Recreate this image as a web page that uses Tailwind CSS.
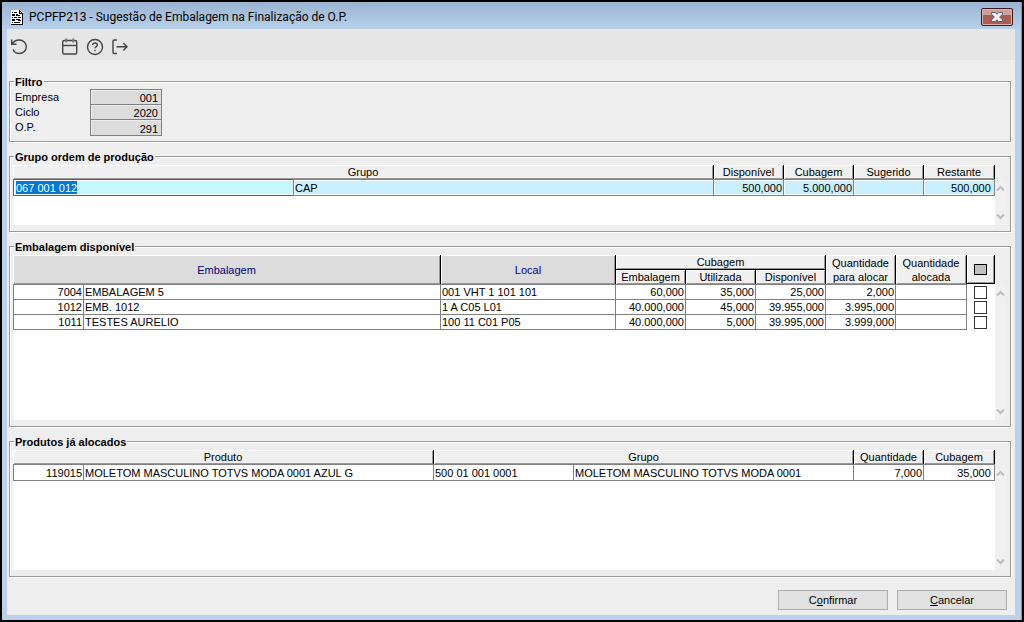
<!DOCTYPE html>
<html lang="pt-BR">
  <head>
    <meta charset="UTF-8" />
    <meta name="viewport" content="width=device-width, initial-scale=1.0" />
    <title>PCPFP213 - Sugestão de Embalagem na Finalização de O.P.</title>
    <script src="https://cdn.jsdelivr.net/npm/@tailwindcss/browser@4"></script>
  </head>

  <body class="flex min-h-screen flex-col bg-black p-[2px] font-['Liberation_Sans',Arial,sans-serif] text-[11px] leading-[14px] text-black">
    <div class="flex flex-1 flex-col border-r border-[#22b4dc] bg-[#b9d1ea] pr-[6px] pb-[5px] pl-[5px]">
      <!-- title bar -->
      <header class="-mr-[6px] -ml-[5px] flex h-[27px] items-center bg-linear-to-b from-[#9ab4d1] to-[#b8d0ea] pt-[3px] pr-[8px] pl-[8px]">
        <svg class="mr-[5px] h-[17px] w-[14px]" viewBox="0 0 14 17" shape-rendering="crispEdges" aria-hidden="true">
          <path d="M1 1h9l3 3v12H1z" fill="#fff" />
          <path d="M12 4h1v12h-1zM1 15h12v1H1zM9 1h1v3h3v1H9zM10 2h1v1h-1zM11 3h1v1h-1z" fill="#000" />
          <path d="M2 3h1v1H2zM4 3h3v1H4zM2 5h3v2H2zM6 5h2v1H6zM6 6h4v1H6zM2 8h1v1H2zM4 8h3v1H4zM8 8h3v1H8zM2 10h3v2H2zM6 10h4v1H6zM8 11h3v1H8zM2 13h1v1H2zM4 13h6v1H4z" fill="#000" />
        </svg>
        <h1 class="flex-1 font-[Roboto,sans-serif] text-[12px] leading-[16px]">PCPFP213 - Sugestão de Embalagem na Finalização de O.P.</h1>
        <button type="button" aria-label="Fechar" class="flex h-[18px] w-[32px] items-center justify-center rounded-[2px] border border-[#3a1a1e] bg-linear-to-b from-[#d0a098] from-40% to-[#a85e50] to-40% shadow-[inset_0_0_0_1px_#dcb4ac]">
          <svg class="h-[10px] w-[12px]" viewBox="0 0 12 10" aria-hidden="true">
            <path d="M.5 .5h4L6 2.300 7.500 .5h4v1.800L8.600 5l2.900 2.700v1.800h-4L6 7.700 4.500 9.500h-4V7.700L3.400 5 .5 2.300z" fill="#f6f6f6" stroke="#53617f" stroke-width="1" />
          </svg>
        </button>
      </header>

      <main class="flex flex-1 flex-col bg-[#eeeeee]">
        <nav class="flex h-[31px] items-center bg-[#e6e6e6] pt-[4px] pl-[3px] text-[#444]">
          <button type="button" aria-label="Desfazer" class="mr-[33px]">
            <svg class="size-[18px]" viewBox="0 0 18 18" fill="none" stroke="currentColor" stroke-width="1.400" aria-hidden="true">
              <path d="M1.700 1.500v4.700h4.800M2 6C3.800 3.200 6.400 2 9.300 2c4 0 7 3 7 6.700s-3 6.800-7 6.800c-2.800 0-5.200-1.600-6.300-4" />
            </svg>
          </button>
          <div class="flex gap-[7px]">
            <button type="button" aria-label="Calendário">
              <svg class="size-[18px]" viewBox="0 0 18 18" fill="none" stroke="currentColor" stroke-width="1.400" aria-hidden="true">
                <rect x="1.700" y="2.500" width="14" height="13.500" rx="1.500" />
                <path d="M1.700 7.500h14" />
                <path d="M5.200 .5v4M12.200 .5v4" stroke="#777" stroke-width="1.800" />
              </svg>
            </button>
            <button type="button" aria-label="Ajuda">
              <svg class="size-[18px]" viewBox="0 0 18 18" fill="none" stroke="currentColor" stroke-width="1.400" aria-hidden="true">
                <circle cx="9" cy="9" r="7.500" />
                <path d="M6.600 7c.2-1.400 1.200-2 2.400-2 1.400 0 2.400.8 2.400 2 0 1.700-2.400 1.700-2.400 3.300M9 11.800v1.500" />
              </svg>
            </button>
            <button type="button" aria-label="Sair">
              <svg class="size-[18px]" viewBox="0 0 18 18" fill="none" stroke="currentColor" stroke-width="1.400" aria-hidden="true">
                <path d="M6 2H3.200Q2 2 2 3.200v11.100q0 1.200 1.200 1.200H6M5.500 8.700h10.500M12.300 5l3.700 3.700-3.700 3.700" />
              </svg>
            </button>
          </div>
        </nav>

        <form class="flex flex-1 flex-col gap-[7px] pt-[14px] pr-[4px] pb-[5px] pl-[2px]">
          <fieldset class="border border-[#9a9a9a] px-[3px] pt-[1px] pb-[5px] shadow-[1px_1px_0_#fff,inset_1px_1px_0_#fff]">
            <legend class="ml-px h-[14px] bg-[#eeeeee] px-[1px] leading-[16px] font-bold">Filtro</legend>
            <div class="grid grid-cols-[75px_72px] pl-[2px] leading-[16px]">
              <label for="empresa" class="h-[15px]">Empresa</label>
              <input id="empresa" readonly value="001" class="h-[16px] border border-[#808080] bg-[#dcdcdc] px-[3px] pt-[2px] text-right shadow-[inset_1px_1px_0_#eee]" />
              <label for="ciclo" class="-mt-px h-[15px]">Ciclo</label>
              <input id="ciclo" readonly value="2020" class="-mt-px h-[16px] border border-[#808080] bg-[#dcdcdc] px-[3px] pt-[2px] text-right shadow-[inset_1px_1px_0_#eee]" />
              <label for="op" class="-mt-px h-[15px]">O.P.</label>
              <input id="op" readonly value="291" class="-mt-px h-[17px] border border-[#808080] bg-[#dcdcdc] px-[3px] pt-[2px] text-right shadow-[inset_1px_1px_0_#eee]" />
            </div>
          </fieldset>

          <fieldset class="border border-[#9a9a9a] pt-[2px] pr-[4px] pb-[6px] pl-[3px] shadow-[1px_1px_0_#fff,inset_1px_1px_0_#fff]">
            <legend class="ml-px h-[14px] bg-[#eeeeee] px-[1px] leading-[16px] font-bold">Grupo ordem de produção</legend>
            <div class="flex">
              <div class="min-h-[60px] flex-1 bg-white">
                <table class="w-full table-fixed border-separate border-spacing-0">
                  <colgroup>
                    <col class="w-[281px]" />
                    <col />
                    <col class="w-[70px]" />
                    <col class="w-[70px]" />
                    <col class="w-[70px]" />
                    <col class="w-[71px]" />
                  </colgroup>
                  <thead class="bg-[#f0f0f0] [&_th]:h-[14px] [&_th]:border-r [&_th]:border-black [&_th]:p-0 [&_th]:font-normal [&_th]:shadow-[inset_1px_1px_0_#fff,inset_-1px_-1px_0_#999]">
                    <tr>
                      <th colspan="2">Grupo</th>
                      <th>Disponível</th>
                      <th>Cubagem</th>
                      <th>Sugerido</th>
                      <th>Restante</th>
                    </tr>
                  </thead>
                  <tbody class="[&_td]:h-[17px] [&_td]:border-y [&_td]:border-r [&_td]:border-[#808080] [&_td]:bg-[#c8f0ff] [&_td]:px-[1px] [&_td]:py-0 [&_td]:shadow-[inset_1px_1px_0_#fff,inset_0_-1px_0_#fff]">
                    <tr>
                      <td class="border-l !border-[#0078d7] !border-r-[#808080] !bg-[#c5f7fd]">
                        <input id="grupo" aria-label="Grupo" value="067 001 012" class="block h-[13px] w-full bg-transparent pl-px outline-none selection:bg-[#0078d7] selection:text-white" />
                      </td>
                      <td>CAP</td>
                      <td class="text-right">500,000</td>
                      <td class="text-right">5.000,000</td>
                      <td></td>
                      <td class="text-right">500,000&thinsp;</td>
                    </tr>
                  </tbody>
                </table>
              </div>
              <div class="mt-[14px] flex w-[11px] flex-col justify-between bg-[#f0f0f0] pt-[6px] pb-[5px] text-[#bdbdbd]">
                <button type="button" aria-label="Rolar para cima"><svg class="ml-px block h-[7px] w-[9px]" viewBox="0 0 9 7" fill="none" stroke="currentColor" stroke-width="2"><path d="M1 5.500l3.500-3.500L8 5.500" /></svg></button>
                <button type="button" aria-label="Rolar para baixo"><svg class="ml-px block h-[7px] w-[9px]" viewBox="0 0 9 7" fill="none" stroke="currentColor" stroke-width="2"><path d="M1 1.500L4.500 5 8 1.500" /></svg></button>
              </div>
            </div>
          </fieldset>

          <fieldset class="border border-[#9a9a9a] pt-[2px] pr-[4px] pb-[6px] pl-[3px] shadow-[1px_1px_0_#fff,inset_1px_1px_0_#fff]">
            <legend class="ml-px h-[14px] bg-[#eeeeee] px-[1px] leading-[16px] font-bold">Embalagem disponível</legend>
            <div class="flex">
              <div class="min-h-[165px] flex-1 bg-white">
                <table class="w-full table-fixed border-separate border-spacing-0">
                  <colgroup>
                    <col class="w-[71px]" />
                    <col />
                    <col class="w-[175px]" />
                    <col class="w-[70px]" />
                    <col class="w-[70px]" />
                    <col class="w-[70px]" />
                    <col class="w-[70px]" />
                    <col class="w-[71px]" />
                    <col class="w-[28px]" />
                  </colgroup>
                  <thead class="bg-[#f0f0f0] [&_th]:border-r [&_th]:border-black [&_th]:p-0 [&_th]:font-normal [&_th]:shadow-[inset_1px_1px_0_#fff,inset_-1px_-1px_0_#999]">
                    <tr class="h-[15px]">
                      <th colspan="2" rowspan="2" class="bg-[#dcdcdc] text-[#000080]">Embalagem</th>
                      <th rowspan="2" class="bg-[#dcdcdc] text-[#000080]">Local</th>
                      <th colspan="3" class="border-b">Cubagem</th>
                      <th rowspan="2">Quantidade para alocar</th>
                      <th rowspan="2">Quantidade alocada</th>
                      <th rowspan="2" class="border-b">
                        <button type="button" aria-label="Marcar todos" class="mx-auto block h-[11px] w-[13px] border border-black bg-[#c0c0c0]"></button>
                      </th>
                    </tr>
                    <tr class="h-[14px]">
                      <th>Embalagem</th>
                      <th>Utilizada</th>
                      <th>Disponível</th>
                    </tr>
                  </thead>
                  <tbody class="[&_td]:h-[15px] [&_td]:border-r [&_td]:border-b [&_td]:border-[#808080] [&_td]:px-[1px] [&_td]:py-0 [&_td:last-child]:pr-[3px] [&_tr:first-child>td]:h-[16px] [&_tr:first-child>td]:border-t">
                    <tr>
                      <td class="border-l text-right">7004</td>
                      <td>EMBALAGEM 5</td>
                      <td>001 VHT 1 101 101</td>
                      <td class="text-right">60,000</td>
                      <td class="text-right">35,000</td>
                      <td class="text-right">25,000</td>
                      <td class="text-right">2,000</td>
                      <td></td>
                      <td class="!border-0"><input type="checkbox" aria-label="Selecionar 7004" class="mx-auto block size-[13px] appearance-none border border-[#333] bg-white checked:bg-[#333]" /></td>
                    </tr>
                    <tr>
                      <td class="border-l text-right">1012</td>
                      <td>EMB. 1012</td>
                      <td>1 A C05 L01</td>
                      <td class="text-right">40.000,000</td>
                      <td class="text-right">45,000</td>
                      <td class="text-right">39.955,000</td>
                      <td class="text-right">3.995,000</td>
                      <td></td>
                      <td class="!border-0"><input type="checkbox" aria-label="Selecionar 1012" class="mx-auto block size-[13px] appearance-none border border-[#333] bg-white checked:bg-[#333]" /></td>
                    </tr>
                    <tr>
                      <td class="border-l text-right">1011</td>
                      <td>TESTES AURELIO</td>
                      <td>100 11 C01 P05</td>
                      <td class="text-right">40.000,000</td>
                      <td class="text-right">5,000</td>
                      <td class="text-right">39.995,000</td>
                      <td class="text-right">3.999,000</td>
                      <td></td>
                      <td class="!border-0"><input type="checkbox" aria-label="Selecionar 1011" class="mx-auto block size-[13px] appearance-none border border-[#333] bg-white checked:bg-[#333]" /></td>
                    </tr>
                  </tbody>
                </table>
              </div>
              <div class="mt-[29px] flex w-[11px] flex-col justify-between bg-[#f0f0f0] pt-[6px] pb-[5px] text-[#bdbdbd]">
                <button type="button" aria-label="Rolar para cima"><svg class="ml-px block h-[7px] w-[9px]" viewBox="0 0 9 7" fill="none" stroke="currentColor" stroke-width="2"><path d="M1 5.500l3.500-3.500L8 5.500" /></svg></button>
                <button type="button" aria-label="Rolar para baixo"><svg class="ml-px block h-[7px] w-[9px]" viewBox="0 0 9 7" fill="none" stroke="currentColor" stroke-width="2"><path d="M1 1.500L4.500 5 8 1.500" /></svg></button>
              </div>
            </div>
          </fieldset>

          <fieldset class="border border-[#9a9a9a] pt-[2px] pr-[4px] pb-[6px] pl-[3px] shadow-[1px_1px_0_#fff,inset_1px_1px_0_#fff]">
            <legend class="ml-px h-[14px] bg-[#eeeeee] px-[1px] leading-[16px] font-bold">Produtos já alocados</legend>
            <div class="flex">
              <div class="min-h-[120px] flex-1 bg-white">
                <table class="w-full table-fixed border-separate border-spacing-0">
                  <colgroup>
                    <col class="w-[71px]" />
                    <col />
                    <col class="w-[140px]" />
                    <col class="w-[280px]" />
                    <col class="w-[70px]" />
                    <col class="w-[71px]" />
                  </colgroup>
                  <thead class="bg-[#f0f0f0] [&_th]:h-[14px] [&_th]:border-r [&_th]:border-black [&_th]:p-0 [&_th]:font-normal [&_th]:shadow-[inset_1px_1px_0_#fff,inset_-1px_-1px_0_#999]">
                    <tr>
                      <th colspan="2">Produto</th>
                      <th colspan="2">Grupo</th>
                      <th>Quantidade</th>
                      <th>Cubagem</th>
                    </tr>
                  </thead>
                  <tbody class="[&_td]:h-[17px] [&_td]:border-y [&_td]:border-r [&_td]:border-[#808080] [&_td]:px-[1px] [&_td]:py-0">
                    <tr>
                      <td class="border-l text-right">119015</td>
                      <td>MOLETOM MASCULINO TOTVS MODA 0001 AZUL G</td>
                      <td>500 01 001 0001</td>
                      <td>MOLETOM MASCULINO TOTVS MODA 0001</td>
                      <td class="text-right">7,000</td>
                      <td class="text-right">35,000&thinsp;</td>
                    </tr>
                  </tbody>
                </table>
              </div>
              <div class="mt-[14px] flex w-[11px] flex-col justify-between bg-[#f0f0f0] pt-[6px] pb-[5px] text-[#bdbdbd]">
                <button type="button" aria-label="Rolar para cima"><svg class="ml-px block h-[7px] w-[9px]" viewBox="0 0 9 7" fill="none" stroke="currentColor" stroke-width="2"><path d="M1 5.500l3.500-3.500L8 5.500" /></svg></button>
                <button type="button" aria-label="Rolar para baixo"><svg class="ml-px block h-[7px] w-[9px]" viewBox="0 0 9 7" fill="none" stroke="currentColor" stroke-width="2"><path d="M1 1.500L4.500 5 8 1.500" /></svg></button>
              </div>
            </div>
          </fieldset>

          <div class="mt-[6px] flex justify-end gap-[9px] pr-[4px]">
            <button type="button" class="h-[20px] w-[110px] border border-[#adadad] bg-[#e1e1e1]">C<u>o</u>nfirmar</button>
            <button type="button" class="h-[20px] w-[110px] border border-[#adadad] bg-[#e1e1e1]"><u>C</u>ancelar</button>
          </div>
        </form>
      </main>
    </div>
    <script>
      const grupoEl = document.getElementById('grupo')
      grupoEl.focus()
      grupoEl.select()
    </script>
  </body>
</html>
